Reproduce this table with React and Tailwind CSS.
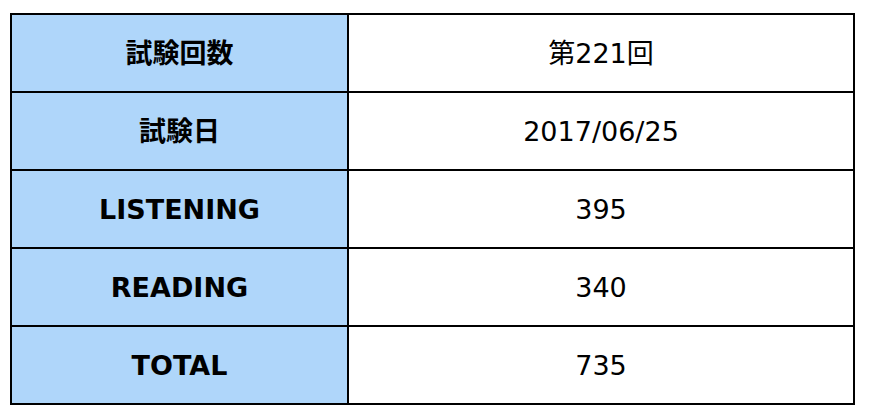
import React from "react";

const rows = [
  ["試験回数", "第221回"],
  ["試験日", "2017/06/25"],
  ["LISTENING", "395"],
  ["READING", "340"],
  ["TOTAL", "735"],
];

export default function App() {
  return (
    <div
      className="w-[869px] h-[420px] bg-white pt-[13px] pl-[10px]"
      style={{ fontFamily: '"DejaVu Sans", "Noto Sans CJK JP", sans-serif' }}
    >
      <div className="w-[845px] border-2 border-black grid grid-cols-[337px_1fr]">
        {rows.map(([k, v], i) => {
          const last = i === rows.length - 1;
          return (
            <React.Fragment key={i}>
              <div
                className={`bg-[#afd6fa] border-r-2 border-black flex items-center justify-center font-bold text-[27px] leading-none text-black ${
                  last ? "h-[76px]" : "h-[78px] border-b-2"
                }`}
              >
                {k}
              </div>
              <div
                className={`bg-white border-black flex items-center justify-center text-[27px] leading-none text-black ${
                  last ? "h-[76px]" : "h-[78px] border-b-2"
                }`}
              >
                {v}
              </div>
            </React.Fragment>
          );
        })}
      </div>
    </div>
  );
}
